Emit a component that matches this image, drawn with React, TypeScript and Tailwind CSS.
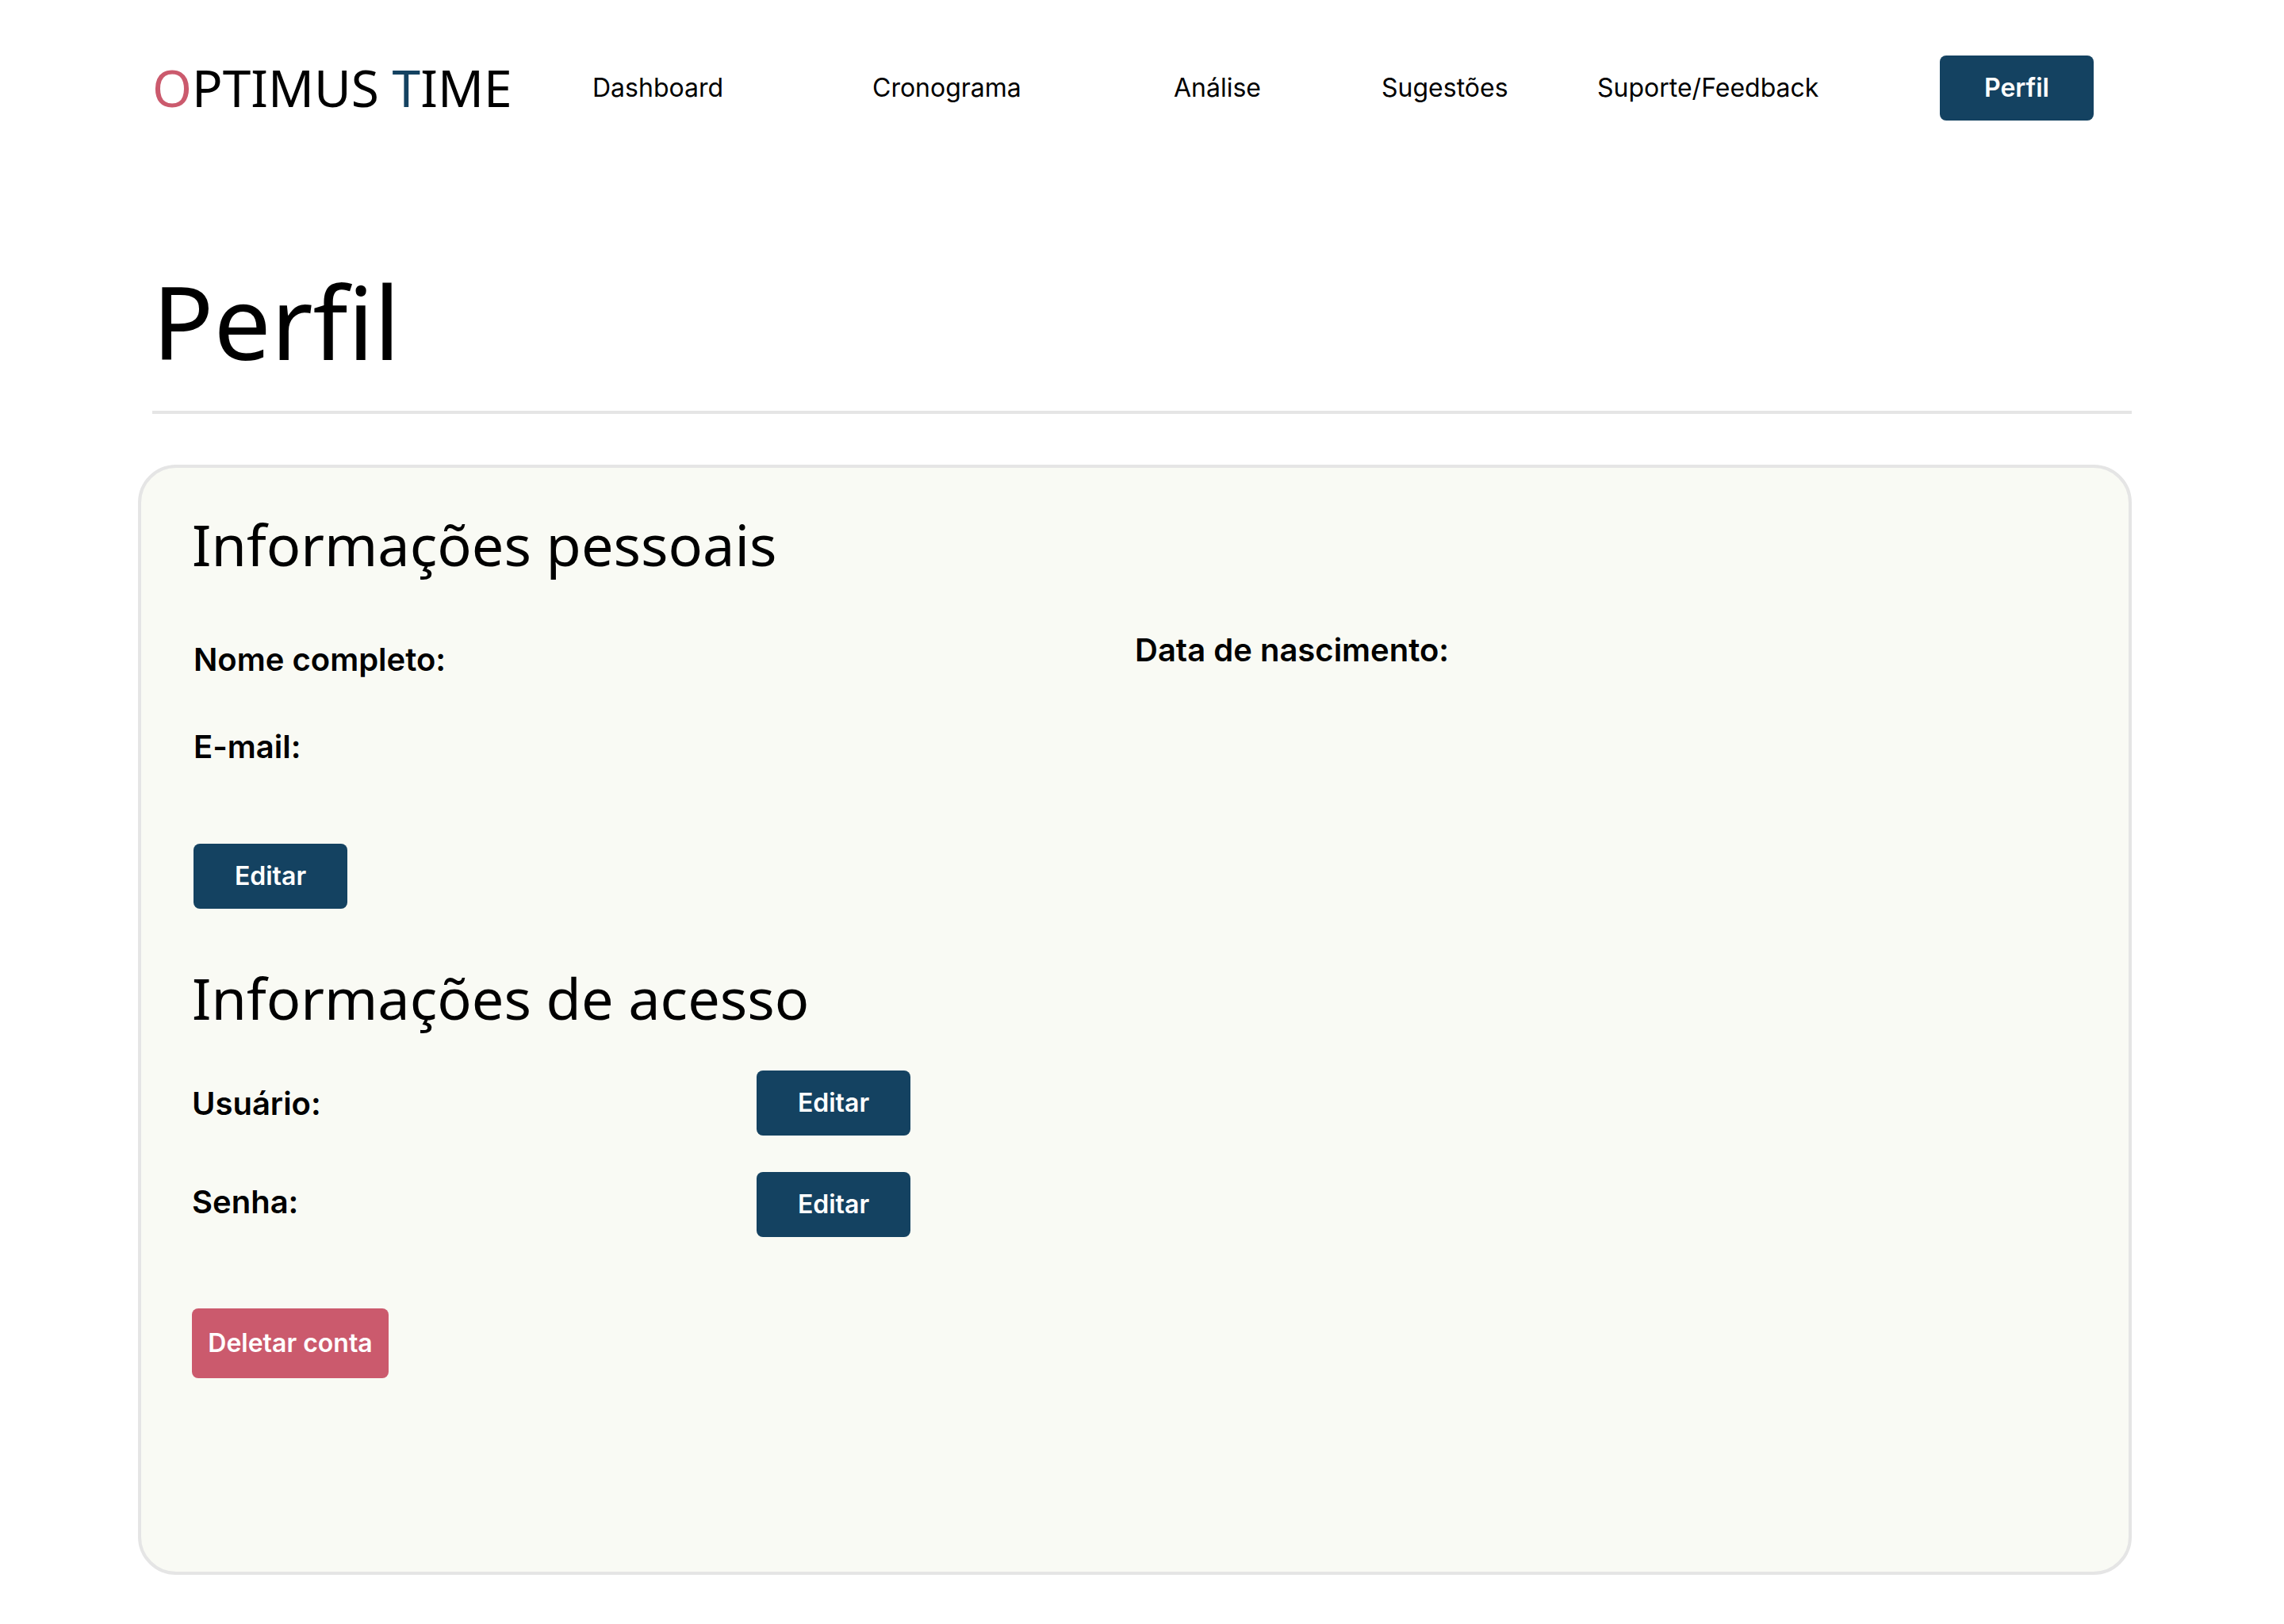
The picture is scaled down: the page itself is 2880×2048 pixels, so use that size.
import type { ReactNode } from "react";

const links = ["Dashboard", "Cronograma", "Análise", "Sugestões", "Suporte/Feedback"];

function PrimaryButton({ children, label }: { children: ReactNode; label?: string }) {
  return (
    <button
      type="button"
      aria-label={label}
      className="h-[82px] w-[194px] rounded-lg bg-[#144261] text-[32px] leading-[50px] font-semibold text-white"
    >
      {children}
    </button>
  );
}

function SectionTitle({ children }: { children: ReactNode }) {
  return (
    <h2 className="font-['Noto_Sans',sans-serif] text-[72px] leading-[88px]">
      {children}
    </h2>
  );
}

function FieldName({ children }: { children: ReactNode }) {
  return <p className="text-[40px] leading-[60px] font-semibold">{children}</p>;
}

export default function App() {
  return (
    <div className="bg-white pb-[62px] font-['Inter',sans-serif] text-black">
      <header className="pt-[70px] pr-60 pl-48">
        <nav
          aria-label="Principal"
          className="grid grid-cols-[555fr_353fr_380fr_262fr_272fr_432fr_194fr] items-center text-[32px] leading-[50px]"
        >
          <a
            href="#inicio"
            className="font-['Noto_Sans',sans-serif] text-[64px] leading-[78px] whitespace-nowrap"
          >
            <span className="text-[#cb5a6d]">O</span>PTIMUS <span className="text-[#144261]">T</span>IME
          </a>
          {links.map((link) => (
            <a key={link} href={"#" + link.toLowerCase()}>
              {link}
            </a>
          ))}
          <PrimaryButton>Perfil</PrimaryButton>
        </nav>
      </header>

      <main className="pt-[172px] pr-48 pl-[174px]">
        <div className="pl-[18px]">
          <h1 className="font-['Noto_Sans',sans-serif] text-[128px] leading-[162px]">
            Perfil
          </h1>
          <hr className="mt-8 border-t-4 border-[#e5e5e5]" />
        </div>

        <div className="mt-16 rounded-[48px] border-4 border-[#e5e5e5] bg-[#f9faf4] px-16 pt-[52px] pb-[244px]">
          <section>
            <SectionTitle>Informações pessoais</SectionTitle>
            <div className="pl-0.5">
              <div className="grid grid-cols-[1187fr_1189fr] pt-[60px]">
                <div className="flex flex-col gap-[50px] pt-3">
                  <FieldName>Nome completo:</FieldName>
                  <FieldName>E-mail:</FieldName>
                </div>
                <FieldName>Data de nascimento:</FieldName>
              </div>
              <div className="pt-[92px]">
                <PrimaryButton label="Editar informações pessoais">Editar</PrimaryButton>
              </div>
            </div>
          </section>

          <section className="pt-[68px]">
            <SectionTitle>Informações de acesso</SectionTitle>
            <div className="grid grid-cols-[712fr_1666fr] pt-12">
              <div className="flex flex-col gap-16 pt-3">
                <FieldName>Usuário:</FieldName>
                <FieldName>Senha:</FieldName>
              </div>
              <div className="flex flex-col items-start gap-[46px]">
                <PrimaryButton label="Editar usuário">Editar</PrimaryButton>
                <PrimaryButton label="Editar senha">Editar</PrimaryButton>
              </div>
            </div>
            <button
              type="button"
              className="mt-[90px] h-[88px] w-[248px] rounded-lg bg-[#cb5a6d] text-[32px] leading-[50px] font-semibold text-white"
            >
              Deletar conta
            </button>
          </section>
        </div>
      </main>
    </div>
  );
}
